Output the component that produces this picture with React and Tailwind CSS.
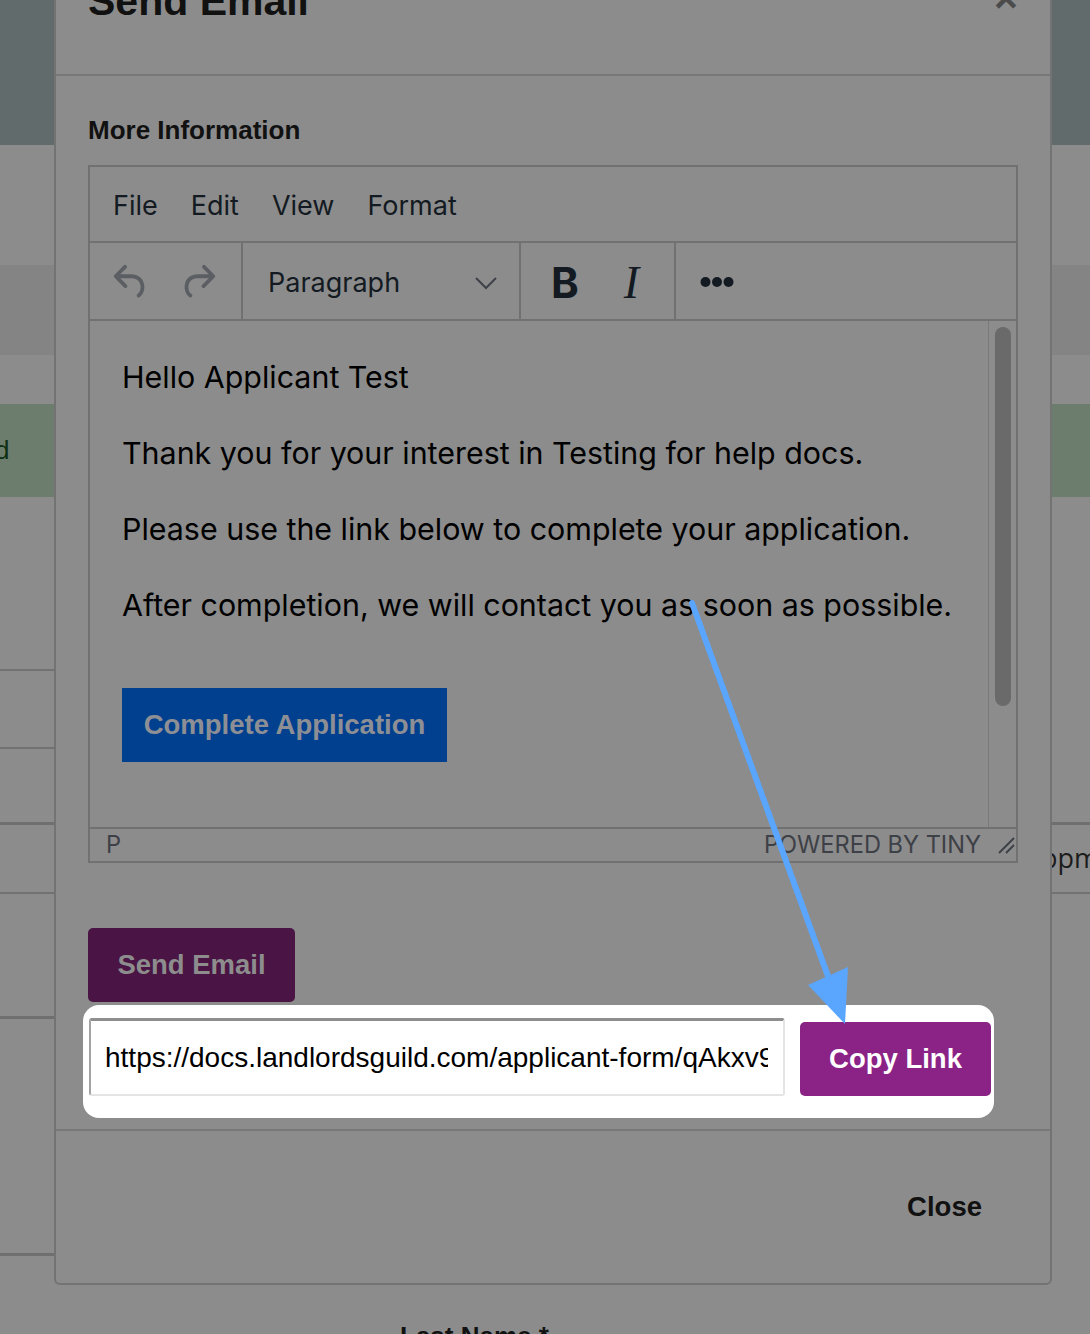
import React from 'react';

// Tiny-style toolbar icons (24x24 grid)
function UndoIcon({ flip }) {
  return (
    <svg width="46" height="46" viewBox="0 0 24 24" className={flip ? '-scale-x-100' : ''}>
      <path
        fill="#5b5e63"
        d="M6.4 8H12c3.7 0 6.2 2 6.8 5.1.6 2.7-.4 5.6-2.3 6.8a1 1 0 0 1-1-1.8c1.1-.6 1.8-2.7 1.4-4.6-.5-2.1-2.1-3.5-4.9-3.5H6.4l3.3 3.3a1 1 0 1 1-1.4 1.4l-5-5a1 1 0 0 1 0-1.4l5-5a1 1 0 0 1 1.4 1.4L6.4 8Z"
      />
    </svg>
  );
}

function Editor() {
  return (
    <div className="mt-[20px] border-2 border-[#717171] font-['Inter',sans-serif] text-[#131a22]">
      {/* menubar */}
      <div className="h-[76px] border-b-2 border-[#717171] flex items-center gap-[33px] pl-[23px] pt-[4px] text-[27px]">
        <span>File</span>
        <span>Edit</span>
        <span>View</span>
        <span>Format</span>
      </div>

      {/* toolbar */}
      <div className="h-[78px] border-b-2 border-[#717171] flex">
        <div className="w-[153px] border-r-2 border-[#717171] flex items-center gap-[21px] pl-[18px] pt-[2px]">
          <UndoIcon />
          <UndoIcon flip />
        </div>
        <div className="w-[278px] border-r-2 border-[#717171] flex items-center justify-between pl-[25px] pr-[22px] pt-[5px]">
          <span className="text-[27px]">Paragraph</span>
          <svg width="22" height="13" viewBox="0 0 22 13">
            <polyline points="1,1 11,11 21,1" fill="none" stroke="#3e4248" strokeWidth="2" />
          </svg>
        </div>
        <div className="w-[155px] border-r-2 border-[#717171] flex items-center pl-[30px] gap-[45px] pt-[4px]">
          <span className="text-[42px] font-bold leading-none">B</span>
          <span className="text-[46px] italic leading-none font-['Liberation_Serif',serif]">I</span>
        </div>
        <div className="flex items-center pl-[24px] pt-[2px]">
          <svg width="34" height="12" viewBox="0 0 34 12">
            <circle cx="5.5" cy="6" r="5" fill="#131a22" />
            <circle cx="17" cy="6" r="5" fill="#131a22" />
            <circle cx="28.5" cy="6" r="5" fill="#131a22" />
          </svg>
        </div>
      </div>

      {/* content */}
      <div className="h-[506px] flex">
        <div className="flex-1 pl-[32px] pt-[35px] text-black text-[30.4px] leading-[42px]">
          <p className="mb-[34px]">Hello Applicant Test</p>
          <p className="mb-[34px]">Thank you for your interest in Testing for help docs.</p>
          <p className="mb-[34px]">Please use the link below to complete your application.</p>
          <p className="mb-[34px]">After completion, we will contact you as soon as possible.</p>
          <div className="mt-[62px] w-[325px] h-[74px] bg-[#00408f] flex items-center justify-center font-['Liberation_Sans',Arial,sans-serif] font-bold text-[27.5px] text-[#8d8f94]">
            Complete Application
          </div>
        </div>
        <div className="w-[28px] border-l border-[#7a7a7a] pl-[6px] pt-[6px]">
          <div className="w-[16px] h-[379px] rounded-full bg-[#6a6a6a]" />
        </div>
      </div>

      {/* status bar */}
      <div className="h-[34px] border-t-2 border-[#717171] flex items-center justify-between pl-[16px] pr-[1px] text-[23.6px] text-[#3d4046]">
        <span>P</span>
        <div className="flex items-center gap-[16px]">
          <span>POWERED BY TINY</span>
          <svg width="18" height="18" viewBox="0 0 18 18">
            <line x1="17" y1="2" x2="2" y2="17" stroke="#3d4046" strokeWidth="2" />
            <line x1="17" y1="9" x2="9" y2="17" stroke="#3d4046" strokeWidth="2" />
          </svg>
        </div>
      </div>
    </div>
  );
}

function Backdrop() {
  return (
    <div className="flex flex-col w-full h-full">
      <div className="h-[145px] shrink-0 bg-[#616b6c]" />
      <div className="h-[120px] shrink-0" />
      <div className="h-[90px] shrink-0 bg-[#848485]" />
      <div className="h-[49px] shrink-0" />
      <div className="h-[93px] shrink-0 bg-[#6c7d6e] flex items-center">
        <span className="-ml-[5px] text-[26px] text-[#0d2f12] font-['Liberation_Sans',sans-serif]">d</span>
      </div>
      <div className="flex flex-1">
        {/* left edge of the table behind */}
        <div className="w-[54px] flex flex-col">
          <div className="h-[172px]" />
          <div className="h-[2px] bg-[#727272]" />
          <div className="h-[76px]" />
          <div className="h-[2px] bg-[#727272]" />
          <div className="h-[73px]" />
          <div className="h-[3px] bg-[#6f6f6f]" />
          <div className="h-[67px]" />
          <div className="h-[2px] bg-[#727272]" />
          <div className="h-[122px]" />
          <div className="h-[3px] bg-[#6f6f6f]" />
          <div className="h-[234px]" />
          <div className="h-[3px] bg-[#6f6f6f]" />
        </div>
        <div className="flex-1 pl-[346px] pt-[824px]">
          <span className="text-[26px] leading-[30px] font-bold text-[#111] font-['Liberation_Sans',sans-serif]">Last Name *</span>
        </div>
        {/* right edge */}
        <div className="w-[38px] flex flex-col overflow-hidden">
          <div className="h-[325px]" />
          <div className="h-[3px] bg-[#6f6f6f]" />
          <div className="h-[67px] flex items-center -ml-[11px] text-[27px] text-[#1c1c1c] font-['Open_Sans',sans-serif] whitespace-nowrap">ppm</div>
          <div className="h-[2px] bg-[#727272]" />
        </div>
      </div>
    </div>
  );
}

export default function App() {
  return (
    <div className="relative w-[1090px] h-[1334px] overflow-hidden bg-[#8c8c8c]">
      <Backdrop />

      {/* modal */}
      <div className="absolute left-[54px] top-[-52px] w-[998px] border-2 border-[#737373] rounded-md bg-[#8c8c8c] font-['Liberation_Sans',Arial,sans-serif]">
        <div className="flex items-start justify-between pl-[32px] pr-[32px] pt-[27px] pb-[48px] border-b-2 border-[#777879]">
          <h5 className="text-[41px] leading-[49px] font-bold text-[#111]">Send Email</h5>
          <span className="text-[41px] leading-[42px] font-bold text-[#4b4b4b]">×</span>
        </div>

        <div className="px-[32px] pt-[39px] pb-[11px]">
          <div className="text-[26px] leading-[30px] font-bold text-[#111]">More Information</div>
          <Editor />

          <button className="block mt-[65px] h-[74px] w-[207px] rounded-[5px] bg-[#4a1545] text-[27.5px] font-bold text-[#8d8d8d]">
            Send Email
          </button>

          {/* highlighted link row */}
          <div className="mt-[3px] -ml-[5px] w-[911px] h-[113px] rounded-[16px] bg-white flex items-end gap-[15px] pl-[6px] pb-[22px]">
            <input
              readOnly
              value="https://docs.landlordsguild.com/applicant-form/qAkxv9aLp2"
              className="w-[696px] h-[78px] rounded-[3px] border-2 border-[#e4e4e4] border-t-[3px] border-t-[#8e8e8e] border-l-[#a3a3a3] pl-[14px] pr-[15px] text-[28px] text-black outline-none bg-white"
            />
            <button className="w-[191px] h-[74px] rounded-[5px] bg-[#8b2286] text-white text-[27.5px] font-bold">
              Copy Link
            </button>
          </div>
        </div>

        <div className="border-t-2 border-[#777879] h-[154px] flex items-center justify-end pr-[68px]">
          <span className="text-[27.5px] font-bold text-[#111]">Close</span>
        </div>
      </div>

      {/* annotation arrow */}
      <svg className="absolute inset-0 pointer-events-none" width="1090" height="1334" viewBox="0 0 1090 1334">
        <line x1="692" y1="603" x2="829" y2="979" stroke="#5aa5fd" strokeWidth="6" strokeLinecap="round" />
        <polygon points="845,1024 808,985 848,967" fill="#5aa5fd" />
      </svg>
    </div>
  );
}
